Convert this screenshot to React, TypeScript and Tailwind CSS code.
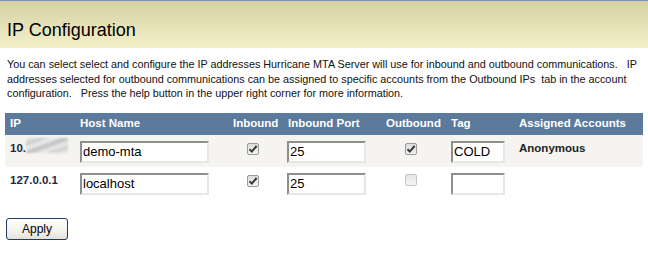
import React from "react";

const font = { fontFamily: '"Liberation Sans", Arial, sans-serif' };

function Check({ checked }: { checked: boolean }) {
  return (
    <span
      className={
        "inline-flex h-[12px] w-[12px] items-center justify-center rounded-[2px] border " +
        (checked
          ? "border-[#9a9a9a] bg-[linear-gradient(#dcdcdc,#f2f2f2)]"
          : "border-[#c4c4c4] bg-[linear-gradient(#e6e6e6,#f4f4f4)]")
      }
    >
      {checked && (
        <svg width="10" height="10" viewBox="0 0 10 10">
          <path d="M1.5 5.2 L3.8 7.6 L8.6 2" fill="none" stroke="#3a3a3a" strokeWidth="2" />
        </svg>
      )}
    </span>
  );
}

function Field({ value, w }: { value: string; w: string }) {
  return (
    <div
      className={
        w +
        " flex h-[22px] items-center border-2 border-t-[#8e8e8e] border-l-[#8e8e8e] border-r-[#e6e6e6] border-b-[#e6e6e6] bg-white pl-[1px] text-[13px] leading-none text-black"
      }
    >
      {value}
    </div>
  );
}

export default function App() {
  return (
    <div className="h-[267px] w-[648px] bg-white" style={font}>
      <div className="h-[48px] border-t border-[#7b93b3] bg-[linear-gradient(#d5d1a3,#f4f1ca)] pl-[7px] pt-[18px] text-[18px] leading-[22px] text-black">
        IP Configuration
      </div>
      <div className="whitespace-nowrap pl-[7px] pt-[9px] text-[10.8px] leading-[14.5px] text-[#111]">
        You can select select and configure the IP addresses Hurricane MTA Server will use for inbound and outbound communications.&nbsp;&nbsp; IP
        <br />
        addresses selected for outbound communications can be assigned to specific accounts from the Outbound IPs&nbsp; tab in the account
        <br />
        configuration.&nbsp;&nbsp; Press the help button in the upper right corner for more information.
      </div>
      <table className="ml-[5px] mt-[12px] w-[638px] border-collapse text-[11.5px]">
        <thead>
          <tr className="h-[22px] bg-[#5b7a9c] text-left font-bold text-white">
            <th className="w-[70px] pl-[5px]">IP</th>
            <th className="w-[153px] pl-[5px]">Host Name</th>
            <th className="w-[55px] pl-[5px]">Inbound</th>
            <th className="w-[98px] pl-[5px]">Inbound Port</th>
            <th className="w-[65px] pl-[5px]">Outbound</th>
            <th className="w-[68px] pl-[5px]">Tag</th>
            <th className="pl-[5px]">Assigned Accounts</th>
          </tr>
        </thead>
        <tbody>
          <tr className="h-[32px] bg-[#f5f4f0] align-top">
            <td className="pl-[5px] pt-[5px] font-bold text-[#1c2a40]">
              <div className="flex items-start">
                <span>10.</span>
                <span className="mt-[-2px] h-[15px] w-[42px] bg-[linear-gradient(160deg,#f2f2f2_0%,#c9c9c9_20%,#efefef_35%,#bdbdbd_50%,#ececec_65%,#cfcfcf_80%,#f3f3f3_100%)] blur-[1px]" />
              </div>
            </td>
            <td className="pl-[5px] pt-[6px]">
              <Field value="demo-mta" w="w-[129px]" />
            </td>
            <td className="pt-[7px] pl-[19px]">
              <Check checked />
            </td>
            <td className="pl-[4px] pt-[6px]">
              <Field value="25" w="w-[79px]" />
            </td>
            <td className="pt-[7px] pl-[24px]">
              <Check checked />
            </td>
            <td className="pl-[5px] pt-[6px]">
              <Field value="COLD" w="w-[54px]" />
            </td>
            <td className="pl-[5px] pt-[5px] font-bold text-[#222]">Anonymous</td>
          </tr>
          <tr className="h-[32px] align-top">
            <td className="pl-[5px] pt-[5px] font-bold text-[#1c2a40]">127.0.0.1</td>
            <td className="pl-[5px] pt-[6px]">
              <Field value="localhost" w="w-[129px]" />
            </td>
            <td className="pt-[7px] pl-[19px]">
              <Check checked />
            </td>
            <td className="pl-[4px] pt-[6px]">
              <Field value="25" w="w-[79px]" />
            </td>
            <td className="pt-[7px] pl-[24px]">
              <Check checked={false} />
            </td>
            <td className="pl-[5px] pt-[6px]">
              <Field value="" w="w-[54px]" />
            </td>
            <td />
          </tr>
        </tbody>
      </table>
      <div className="pl-[6px] pt-[17px]">
        <button className="h-[22px] w-[62px] rounded-[3px] border border-[#1d3c66] bg-[linear-gradient(#ffffff,#f3f3ee_60%,#e2e1d8)] text-[12px] text-black">
          Apply
        </button>
      </div>
    </div>
  );
}
